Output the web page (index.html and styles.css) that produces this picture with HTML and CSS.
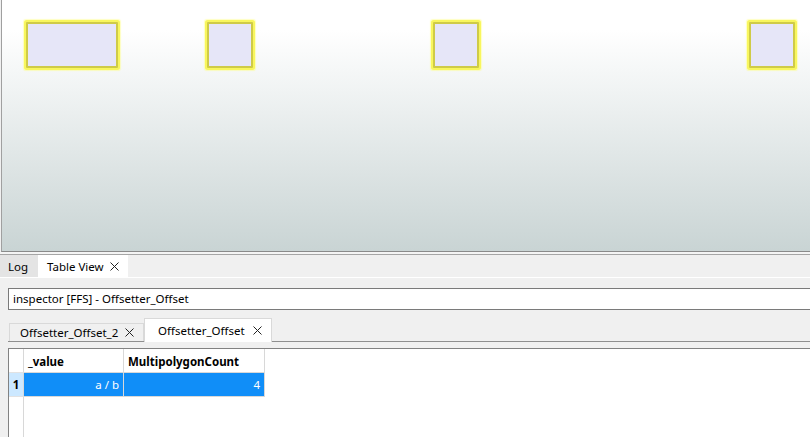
FILE: index.html
```html
<!DOCTYPE html>
<html>
<head>
<meta charset="utf-8">
<link rel="stylesheet" href="styles.css">
</head>
<body>
<div class="canvas">
  <div class="shape s1"></div>
  <div class="shape s2"></div>
  <div class="shape s3"></div>
  <div class="shape s4"></div>
</div>
<div class="splitter"></div>
<div class="dock-tabs">
  <div class="dtab log">Log</div>
  <div class="dtab active">Table View <svg class="x" width="9" height="9" viewBox="0 0 9 9"><path d="M0.5 0.5L8.5 8.5M8.5 0.5L0.5 8.5" stroke="#222" stroke-width="1"/></svg></div>
</div>
<div class="panel">
  <div class="input">inspector [FFS] - Offsetter_Offset</div>
  <div class="itabs">
    <div class="itab">Offsetter_Offset_2 <svg class="x" width="9" height="9" viewBox="0 0 9 9"><path d="M0.5 0.5L8.5 8.5M8.5 0.5L0.5 8.5" stroke="#222" stroke-width="1"/></svg></div>
    <div class="itab active">Offsetter_Offset <svg class="x" width="9" height="9" viewBox="0 0 9 9"><path d="M0.5 0.5L8.5 8.5M8.5 0.5L0.5 8.5" stroke="#222" stroke-width="1"/></svg></div>
  </div>
  <div class="pane">
    <div class="table">
      <div class="row head">
        <div class="rh"></div>
        <div class="c c1">_value</div>
        <div class="c c2">MultipolygonCount</div>
      </div>
      <div class="row sel">
        <div class="rh">1</div>
        <div class="c c1 num">a / b</div>
        <div class="c c2 num">4</div>
      </div>
      <div class="rest"><div class="rh"></div></div>
    </div>
  </div>
</div>
</body>
</html>
```

FILE: styles.css
```css
* { box-sizing: border-box; }
html, body { margin: 0; padding: 0; }
body {
  width: 810px;
  height: 437px;
  overflow: hidden;
  background: #f0f0f0;
  font-family: "Segoe UI", "Noto Sans", "Liberation Sans", sans-serif;
  font-size: 11.5px;
  color: #000;
}
.canvas {
  position: relative;
  height: 252px;
  margin-left: 1px;
  border-left: 1px solid #a0a0a0;
  border-bottom: 1px solid #8a8a8a;
  background: linear-gradient(to bottom, #ffffff 0px, #ffffff 30px, #c9d4d4 251px);
}
.shape {
  position: absolute;
  top: 22px;
  height: 46px;
  width: 46px;
  background: #e6e6f8;
  border: 2px solid #cfcb48;
  box-shadow: 0 0 0 2px #f8f65e, 0 0 1px 3px rgba(255, 255, 120, 0.45);
  border-radius: 1px;
}
.s1 { left: 24px; width: 92px; }
.s2 { left: 205px; }
.s3 { left: 431px; }
.s4 { left: 747px; }
.splitter {
  height: 3px;
  background: #f4f4f4;
  border-bottom: 1px solid #a5a5a5;
}
.dock-tabs {
  display: flex;
  height: 23px;
  border-bottom: 1px solid #ffffff;
}
.dtab {
  display: flex;
  align-items: center;
  padding: 0 8px;
  background: #e4e4e4;
  white-space: nowrap;
}
.dtab.log { width: 38px; }
.dtab.active {
  background: #ffffff;
  padding: 0 9px 0 9px;
  width: 90px;
  justify-content: space-between;
}
.x { flex: none; }
.panel {
  padding: 10px 0 0 8px;
}
.input {
  height: 22px;
  border: 1px solid #7a7a7a;
  border-right: none;
  background: #fff;
  padding: 0 0 0 4px;
  line-height: 20px;
  white-space: nowrap;
}
.itabs {
  display: flex;
  align-items: flex-end;
  height: 31px;
  padding-left: 1px;
  position: relative;
  z-index: 1;
}
.itab {
  display: flex;
  align-items: center;
  height: 18px;
  padding: 0 9px 0 10px;
  width: 135px;
  background: #f0f0f0;
  border: 1px solid #d9d9d9;
  border-bottom: none;
  white-space: nowrap;
  justify-content: space-between;
}
.itab.active {
  height: 24px;
  width: 128px;
  background: #fff;
  border-color: #d9d9d9;
  margin-bottom: -1px;
  padding: 0 9px 0 13px;
}
.pane {
  border-top: 1px solid #8f8f8f;
  padding-top: 6px;
}
.table {
  border-top: 1px solid #828282;
  border-left: 1px solid #828282;
  background: #fff;
  height: 100px;
}
.row {
  display: flex;
  height: 24px;
}
.rh {
  width: 15px;
  flex: none;
  border-right: 1px solid #d8d8d8;
  border-bottom: 1px solid #e2e2e2;
  display: flex;
  align-items: center;
  justify-content: center;
  font-weight: bold;
}
.c {
  display: flex;
  align-items: center;
  padding: 0 4px;
  border-right: 1px solid #d8d8d8;
  border-bottom: 1px solid #d8d8d8;
  white-space: nowrap;
}
.c1 { width: 100px; }
.c2 { width: 141px; }
.head .c { font-weight: bold; padding-top: 2px; }
.sel .rh { background: #cce8ff; }
.sel .c {
  background: #108ef8;
  color: #fff;
  justify-content: flex-end;
}
.rest { height: 60px; }
.rest .rh { height: 100%; border-bottom: none; }
```
